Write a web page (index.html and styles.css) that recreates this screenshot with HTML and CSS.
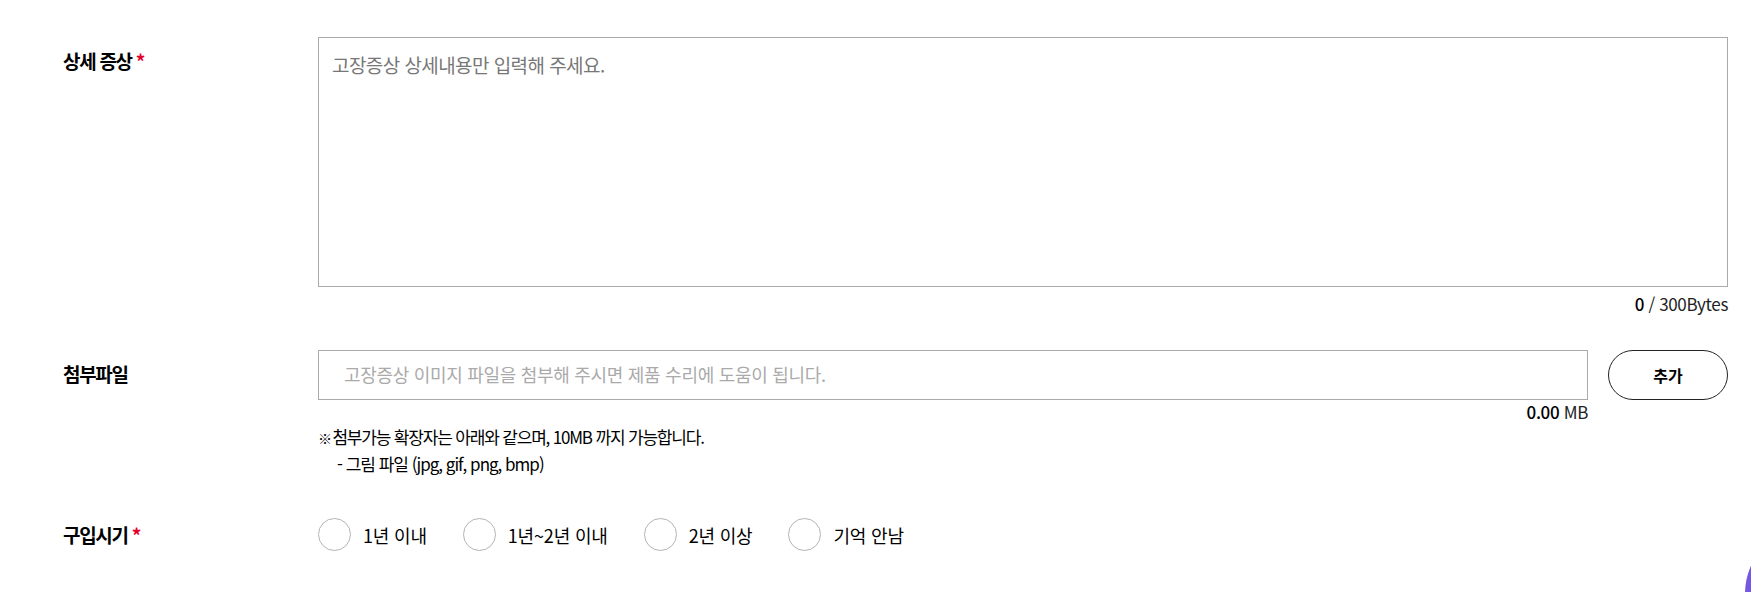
FILE: index.html
```html
<!DOCTYPE html>
<html lang="ko">

<head>
    <meta charset="UTF-8">
    <meta name="viewport" content="width=device-width, initial-scale=1.0">
    <title>고장 접수</title>
    <link rel="stylesheet" href="styles.css">
</head>

<body>
    <div class="form">
        <div class="row row-symptom">
            <div class="label">상세 증상 <span class="req">*</span></div>
            <div class="field">
                <textarea class="symptom" placeholder="고장증상 상세내용만 입력해 주세요."></textarea>
                <p class="count"><strong>0</strong> / 300Bytes</p>
            </div>
        </div>
        <div class="row row-file">
            <div class="label">첨부파일</div>
            <div class="field">
                <div class="file-line">
                    <div class="file-col">
                        <input class="file-name" type="text" placeholder="고장증상 이미지 파일을 첨부해 주시면 제품 수리에 도움이 됩니다.">
                        <p class="size"><strong>0.00</strong> MB</p>
                    </div>
                    <button class="add-btn">추가</button>
                </div>
                <p class="note note-main"><span class="mark">※</span> 첨부가능 확장자는 아래와 같으며, 10MB 까지 가능합니다.</p>
                <p class="note note-sub">- 그림 파일 (jpg, gif, png, bmp)</p>
            </div>
        </div>
        <div class="row row-date">
            <div class="label">구입시기 <span class="req">*</span></div>
            <div class="field radios">
                <label class="radio"><span class="circle"></span>1년 이내</label>
                <label class="radio"><span class="circle"></span>1년~2년 이내</label>
                <label class="radio"><span class="circle"></span>2년 이상</label>
                <label class="radio"><span class="circle"></span>기억 안남</label>
            </div>
        </div>
    </div>
    <div class="float-btn"><span></span></div>
</body>

</html>
```

FILE: styles.css
```css
* {
    box-sizing: border-box;
    margin: 0;
    padding: 0;
}

html,
body {
    height: 592px;
    overflow: hidden;
}

body {
    font-family: "Noto Sans CJK KR", "Noto Sans", sans-serif;
    background-color: #fff;
    color: #000;
    letter-spacing: -0.05em;
    position: relative;
}

.form {
    padding: 37px 23px 0 63px;
}

.row {
    display: flex;
}

.label {
    width: 255px;
    flex-shrink: 0;
    font-size: 19px;
    font-weight: 700;
    line-height: 26px;
    letter-spacing: -1.3px;
}

.req {
    color: #e4002b;
}

.field {
    flex-grow: 1;
}

.row-symptom .label {
    padding-top: 11px;
}

.symptom {
    display: block;
    width: 100%;
    height: 250px;
    border: 1px solid #aaa;
    padding: 12px 13px;
    font: inherit;
    font-size: 19px;
    line-height: 30px;
    letter-spacing: -0.03em;
    resize: none;
    outline: none;
}

.symptom::placeholder {
    color: #777;
    opacity: 1;
}

.count,
.size {
    text-align: right;
    font-size: 17px;
    line-height: 24px;
    letter-spacing: -0.35px;
    color: #222;
    margin-top: 5px;
}

.count strong,
.size strong {
    font-weight: 500;
    color: #000;
}

.row-file {
    margin-top: 34px;
}

.row-file .label {
    padding-top: 11px;
}

.file-line {
    display: flex;
    gap: 20px;
}

.file-col {
    flex-grow: 1;
}

.file-name {
    display: block;
    width: 100%;
    height: 50px;
    border: 1px solid #aaa;
    padding: 0 25px 2px;
    font: inherit;
    font-size: 18px;
    letter-spacing: -0.3px;
    outline: none;
}

.file-name::placeholder {
    color: #aaa;
    opacity: 1;
}

.size {
    margin-top: 0;
}

.add-btn {
    width: 120px;
    height: 50px;
    background: #fff;
    border: 1px solid #222;
    border-radius: 25px;
    font: inherit;
    font-size: 16px;
    font-weight: 700;
    cursor: pointer;
}

.note {
    font-size: 17px;
    line-height: 25px;
    letter-spacing: -1px;
}

.note-main {
    letter-spacing: -1.18px;
}

.mark {
    font-size: 14px;
    margin-right: -2px;
}

.note-sub {
    padding-left: 19px;
}

.row-date {
    margin-top: 42px;
}

.row-date .label {
    padding-top: 4px;
}

.radios {
    display: flex;
    gap: 36px;
}

.radio {
    display: flex;
    align-items: center;
    gap: 12px;
    font-size: 18px;
    line-height: 32px;
    letter-spacing: -0.01em;
}

.circle {
    width: 33px;
    height: 33px;
    border: 1px solid #b4b4b4;
    border-radius: 50%;
}

/* only the edge of the floating button is in view */
.float-btn {
    position: absolute;
    right: 0;
    bottom: 0;
    width: 10px;
    height: 40px;
    overflow: hidden;
}

.float-btn span {
    position: absolute;
    left: 4px;
    top: -28px;
    width: 140px;
    height: 140px;
    border-radius: 50%;
    background: #7656e4;
}
```
